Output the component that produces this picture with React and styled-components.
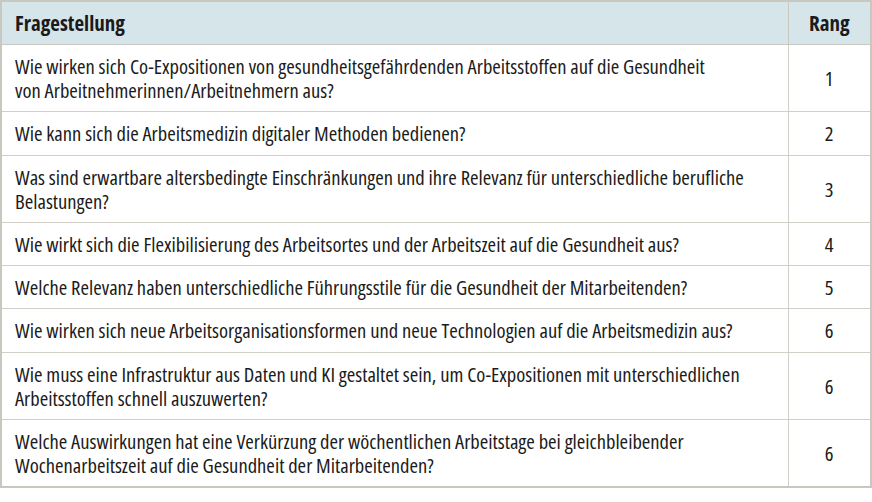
import React from "react";
import styled, { createGlobalStyle } from "styled-components";

const Global = createGlobalStyle`
  html, body { margin: 0; padding: 0; background: #ffffff; }
`;

const Table = styled.table`
  width: 872px;
  table-layout: fixed;
  border-collapse: collapse;
  border: 2px solid #c8c8c0;
  font-family: "Open Sans", "Roboto Condensed", "DejaVu Sans Condensed", sans-serif;
  font-stretch: 75%;
  color: #1b1b1b;
`;

const HeadCell = styled.th`
  height: 42px;
  padding: 0 13px;
  background: #d6e5ea;
  border: 1px solid #c8c8c0;
  font-size: 21px;
  font-weight: 700;
  text-align: ${(p) => (p.$center ? "center" : "left")};
  vertical-align: middle;
`;

const Cell = styled.td`
  padding: 9px 13px;
  border: 1px solid #d0d0c8;
  font-size: 20.6px;
  line-height: 24.2px;
  text-align: ${(p) => (p.$center ? "center" : "left")};
  vertical-align: middle;
  white-space: nowrap;
`;

const rows = [
  [
    "Wie wirken sich Co-Expositionen von gesundheitsgefährdenden Arbeitsstoffen auf die Gesundheit",
    "von Arbeitnehmerinnen/Arbeitnehmern aus?",
    "1",
  ],
  ["Wie kann sich die Arbeitsmedizin digitaler Methoden bedienen?", null, "2"],
  [
    "Was sind erwartbare altersbedingte Einschränkungen und ihre Relevanz für unterschiedliche berufliche",
    "Belastungen?",
    "3",
  ],
  [
    "Wie wirkt sich die Flexibilisierung des Arbeitsortes und der Arbeitszeit auf die Gesundheit aus?",
    null,
    "4",
  ],
  [
    "Welche Relevanz haben unterschiedliche Führungsstile für die Gesundheit der Mitarbeitenden?",
    null,
    "5",
  ],
  [
    "Wie wirken sich neue Arbeitsorganisationsformen und neue Technologien auf die Arbeitsmedizin aus?",
    null,
    "6",
  ],
  [
    "Wie muss eine Infrastruktur aus Daten und KI gestaltet sein, um Co-Expositionen mit unterschiedlichen",
    "Arbeitsstoffen schnell auszuwerten?",
    "6",
  ],
  [
    "Welche Auswirkungen hat eine Verkürzung der wöchentlichen Arbeitstage bei gleichbleibender",
    "Wochenarbeitszeit auf die Gesundheit der Mitarbeitenden?",
    "6",
  ],
];

export default function App() {
  return (
    <>
      <Global />
      <Table>
        <colgroup>
          <col style={{ width: "787px" }} />
          <col />
        </colgroup>
        <thead>
          <tr>
            <HeadCell>Fragestellung</HeadCell>
            <HeadCell $center>Rang</HeadCell>
          </tr>
        </thead>
        <tbody>
          {rows.map(([a, b, r], i) => (
            <tr key={i}>
              <Cell>
                {a}
                {b && (
                  <>
                    <br />
                    {b}
                  </>
                )}
              </Cell>
              <Cell $center>{r}</Cell>
            </tr>
          ))}
        </tbody>
      </Table>
    </>
  );
}
